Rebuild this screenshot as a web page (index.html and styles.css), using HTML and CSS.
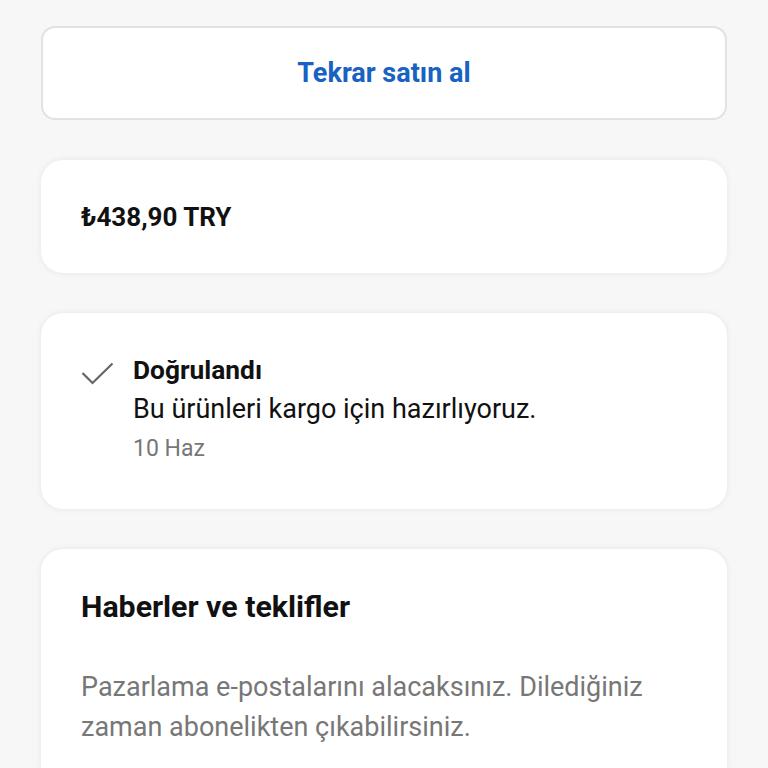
FILE: index.html
```html
<!DOCTYPE html>
<html lang="tr">
<head>
  <meta charset="UTF-8" />
  <meta name="viewport" content="width=device-width, initial-scale=1" />
  <title>Sipariş</title>
  <link rel="stylesheet" href="styles.css">
</head>
<body>
  <main class="page">
    <!-- Buy again -->
    <button class="buy-again">Tekrar satın al</button>

    <!-- Total -->
    <section class="card total-card">
      <p class="total">₺438,90 TRY</p>
    </section>

    <!-- Status -->
    <section class="card status-card">
      <svg class="check" width="34" height="24" viewBox="0 0 34 24">
        <path d="M1.5 11 L11.5 21 L31.5 1.5" fill="none" stroke="#666" stroke-width="2.2" />
      </svg>
      <div class="status-text">
        <h3>Doğrulandı</h3>
        <p class="status-desc">Bu ürünleri kargo için hazırlıyoruz.</p>
        <p class="status-date">10 Haz</p>
      </div>
    </section>

    <!-- News -->
    <section class="card news-card">
      <h2>Haberler ve teklifler</h2>
      <p class="news-desc">Pazarlama e-postalarını alacaksınız. Dilediğiniz zaman abonelikten çıkabilirsiniz.</p>
    </section>
  </main>
</body>
</html>
```

FILE: styles.css
```css
body {
  font-family: Roboto, "Noto Sans", Arial, sans-serif;
  margin: 0;
  padding: 0;
  background-color: #f7f7f7;
  color: #111;
}

.page {
  padding: 26px 41px 0;
  display: flex;
  flex-direction: column;
  gap: 40px;
}

p, h2, h3 {
  margin: 0;
}

.buy-again {
  height: 94px;
  background: #fff;
  border: 2px solid #e2e2e2;
  border-radius: 14px;
  color: #1762c2;
  font-family: inherit;
  font-size: 27px;
  font-weight: 700;
  cursor: pointer;
}

.card {
  background: #fff;
  border-radius: 22px;
  box-shadow: 0 0 6px rgba(0,0,0,0.08);
  padding: 0 40px;
}

.total-card {
  height: 113px;
  display: flex;
  align-items: center;
}

.total {
  font-size: 26px;
  font-weight: 700;
}

.status-card {
  height: 196px;
  display: flex;
  align-items: flex-start;
  gap: 18px;
  padding-top: 42px;
  box-sizing: border-box;
}

.check {
  margin-top: 7px;
}

.status-text h3 {
  font-size: 26.3px;
  font-weight: 700;
  line-height: 30px;
}

.status-desc {
  margin-top: 4px;
  font-size: 27px;
  line-height: 40px;
}

.status-date {
  font-size: 23px;
  line-height: 40px;
  color: #777;
}

.news-card {
  padding-top: 40px;
  padding-bottom: 40px;
}

.news-card h2 {
  font-size: 30.3px;
  font-weight: 700;
  line-height: 36px;
}

.news-desc {
  margin-top: 42px;
  font-size: 27px;
  line-height: 40px;
  color: #777;
}
```
